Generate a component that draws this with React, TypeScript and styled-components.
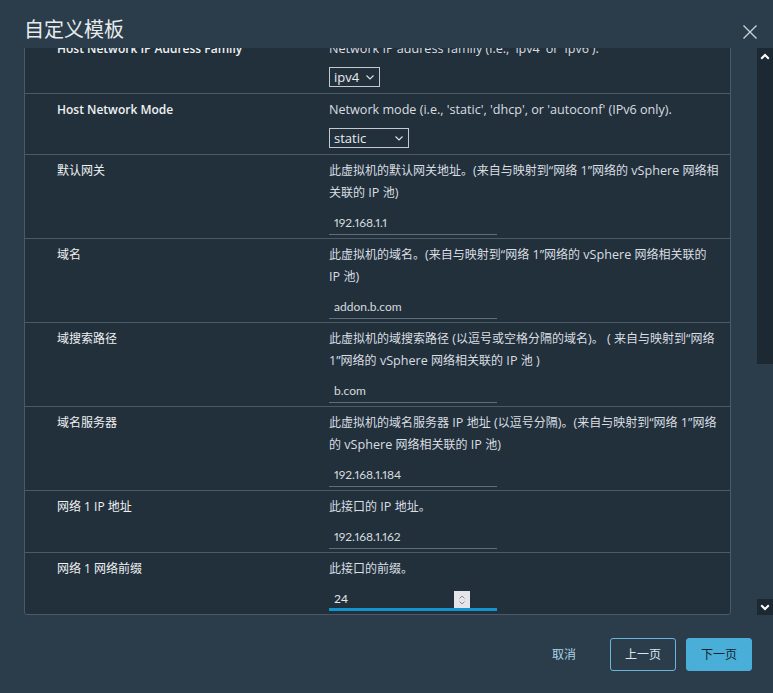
import React, { useCallback, useLayoutEffect, useRef, useState } from "react";
import styled, { createGlobalStyle } from "styled-components";

const FONT = `"Open Sans", "Noto Sans CJK SC", sans-serif`;
const VALUE_FONT = `Lato, "Noto Sans CJK SC", sans-serif`;

const GlobalStyle = createGlobalStyle`
  html, body { margin: 0; padding: 0; height: 100%; }
  body {
    background: #2b3d4a;
    font-family: ${FONT};
    color: #e3e8eb;
    overflow: hidden;
  }
  #root { height: 100%; }
  * { box-sizing: border-box; }
`;

const Dialog = styled.div`
  display: flex;
  flex-direction: column;
  height: 100vh;
  background: #2b3d4a;
`;

const Header = styled.header`
  flex: 0 0 48px;
  display: flex;
  align-items: flex-start;
  justify-content: space-between;
  padding: 17px 16px 0 24px;
`;

const Title = styled.h1`
  margin: 0;
  font-size: 20px;
  line-height: 26px;
  font-weight: 400;
  color: #e6ebee;
`;

const CloseButton = styled.button`
  background: none;
  border: 0;
  padding: 0;
  margin-top: 8px;
  width: 14px;
  height: 14px;
  color: #c9d1d6;
  display: flex;
  cursor: pointer;
`;

const BodyRow = styled.div`
  flex: 1 1 auto;
  min-height: 0;
  display: flex;
`;

const Scroller = styled.div`
  flex: 1 1 auto;
  min-width: 0;
  overflow-y: auto;
  padding: 0 26px 0 24px;
  scrollbar-width: none;
  &::-webkit-scrollbar { display: none; }
`;

const ScrollBar = styled.div`
  flex: 0 0 16px;
  display: flex;
  flex-direction: column;
  background: #1c2832;
`;

const ScrollButton = styled.button`
  flex: 0 0 16px;
  width: 16px;
  border: 0;
  padding: 0;
  background: #1c2832;
  display: flex;
  align-items: center;
  justify-content: center;
  cursor: pointer;
`;

const Track = styled.div`
  flex: 1 1 auto;
  display: flex;
  flex-direction: column;
`;

const Thumb = styled.div`
  width: 16px;
  background: #2b3d4a;
`;

const Grid = styled.div`
  border: 1px solid #4b5a66;
  border-radius: 3px;
  background: #22303b;
`;

const Row = styled.div`
  display: grid;
  grid-template-columns: 272px 1fr;
  padding: 5px 9.5px 3px 32px;
  & + & { border-top: 1px solid #4b5a66; }
`;

const Label = styled.div<{ $latin: boolean }>`
  font-size: 12px;
  line-height: 22px;
  font-weight: ${(p) => (p.$latin ? 600 : 400)};
  color: #eef1f3;
`;

const Cell = styled.div`
  display: flex;
  flex-direction: column;
  align-items: flex-start;
  min-width: 0;
`;

const Desc = styled.div`
  font-size: 12px;
  line-height: 22px;
  color: #d9dee2;
  width: 100%;
`;

const LatinRun = styled.span`
  font-size: 12.6px;
`;

const TextInput = styled.input`
  margin-top: 7px;
  width: 168px;
  height: 24px;
  border: 0;
  border-bottom: 1px solid #5f6e79;
  background: transparent;
  color: #d5dbdf;
  font: 12px ${VALUE_FONT};
  font-variant-numeric: proportional-nums;
  padding: 0 5px;
  outline: none;
`;

const SelectWrap = styled.div`
  position: relative;
  margin: 7px 0 3px;
  display: inline-flex;
`;

const Select = styled.select`
  appearance: none;
  height: 20px;
  border: 1px solid #c3c9ce;
  border-radius: 0;
  background: transparent;
  color: #e8ecef;
  font: 13px ${FONT};
  padding: 0 19px 0 4px;
  outline: none;
  & option { color: #000; }
`;

const Chevron = styled.svg`
  position: absolute;
  right: 6px;
  top: 8px;
  pointer-events: none;
`;

const NumberWrap = styled.div`
  margin-top: 7px;
  display: flex;
  align-items: flex-end;
  width: 168px;
  height: 24px;
  border-bottom: 3px solid #1394d0;
`;

const NumberInput = styled.input`
  width: 125px;
  height: 20px;
  border: 0;
  background: transparent;
  color: #e3e8eb;
  font: 12px ${VALUE_FONT};
  padding: 0 5px;
  outline: none;
`;

const Spinner = styled.span`
  width: 16px;
  height: 17px;
  background: #e4e4ea;
  display: flex;
  align-items: center;
  justify-content: center;
`;

const Footer = styled.footer`
  flex: 0 0 78px;
  display: flex;
  justify-content: flex-end;
  align-items: center;
  gap: 10px;
  padding-right: 21px;
`;

type Variant = "flat" | "outline" | "primary";

const Button = styled.button<{ $variant: Variant }>`
  height: 33px;
  width: ${(p) => (p.$variant === "flat" ? "72px" : "66px")};
  border-radius: 3px;
  font: 12px ${FONT};
  cursor: pointer;
  border: 1px solid
    ${(p) => (p.$variant === "outline" ? "#67b6dc" : p.$variant === "primary" ? "#49afd9" : "transparent")};
  background: ${(p) => (p.$variant === "primary" ? "#49afd9" : "transparent")};
  color: ${(p) => (p.$variant === "primary" ? "#17242c" : p.$variant === "outline" ? "#d9e6ee" : "#a9d2e6")};
`;

type Field =
  | { kind: "text"; value: string; type?: string }
  | { kind: "select"; value: string; options: string[] }
  | { kind: "number"; value: string };

type Prop = { label: string; desc: string; field: Field };

const rows: Prop[] = [
  { label: "主机名", desc: "此虚拟机的主机名。留空则使用 IP 地址的反向查找结果。", field: { kind: "text", value: "addon" } },
  { label: "Root 密码", desc: "root 用户帐户的初始密码。", field: { kind: "text", value: "VMware1!", type: "password" } },
  { label: "确认 Root 密码", desc: "再次输入 root 用户帐户的初始密码。", field: { kind: "text", value: "VMware1!", type: "password" } },
  { label: "Enable SSH", desc: "Enable SSH access to this VM (i.e., 'True' or 'False').", field: { kind: "select", value: "True", options: ["True", "False"] } },
  { label: "NTP 服务器", desc: "此虚拟机使用的 NTP 服务器 (以逗号分隔的主机名或 IP 地址)。如果留空，将使用 VMware Tools 进行时间同步。", field: { kind: "text", value: "pool.ntp.org" } },
  { label: "时区", desc: "此虚拟机的时区 (例如 'Asia/Shanghai')。", field: { kind: "text", value: "Asia/Shanghai" } },
  { label: "网络 1 IPv6 地址", desc: "此接口的 IPv6 地址。(来自与映射到“网络 1”网络的 vSphere 网络相关联的 IP 池，留空则不配置)", field: { kind: "text", value: "" } },
  { label: "网络 1 IPv6 前缀", desc: "此接口的 IPv6 前缀长度。(来自与映射到“网络 1”网络的 vSphere 网络相关联的 IP 池)", field: { kind: "text", value: "" } },
  { label: "广播地址", desc: "此虚拟机的广播地址。(来自与映射到“网络 1”网络的 vSphere 网络相关联的 IP 池)", field: { kind: "text", value: "192.168.1.255" } },
  { label: "Host Network Name", desc: "Network interface name (i.e., 'eth0').", field: { kind: "text", value: "eth0" } },
  { label: "Host Network IP Address Family", desc: "Network IP address family (i.e., 'ipv4' or 'ipv6').", field: { kind: "select", value: "ipv4", options: ["ipv4", "ipv6"] } },
  { label: "Host Network Mode", desc: "Network mode (i.e., 'static', 'dhcp', or 'autoconf' (IPv6 only).", field: { kind: "select", value: "static", options: ["static", "dhcp", "autoconf"] } },
  { label: "默认网关", desc: "此虚拟机的默认网关地址。(来自与映射到“网络 1”网络的 vSphere 网络相关联的 IP 池)", field: { kind: "text", value: "192.168.1.1" } },
  { label: "域名", desc: "此虚拟机的域名。(来自与映射到“网络 1”网络的 vSphere 网络相关联的 IP 池)", field: { kind: "text", value: "addon.b.com" } },
  { label: "域搜索路径", desc: "此虚拟机的域搜索路径 (以逗号或空格分隔的域名)。 ( 来自与映射到“网络 1”网络的 vSphere 网络相关联的 IP 池 )", field: { kind: "text", value: "b.com" } },
  { label: "域名服务器", desc: "此虚拟机的域名服务器 IP 地址 (以逗号分隔)。(来自与映射到“网络 1”网络的 vSphere 网络相关联的 IP 池)", field: { kind: "text", value: "192.168.1.184" } },
  { label: "网络 1 IP 地址", desc: "此接口的 IP 地址。", field: { kind: "text", value: "192.168.1.162" } },
  { label: "网络 1 网络前缀", desc: "此接口的前缀。", field: { kind: "number", value: "24" } },
];

const CJK = /[\u2e80-\u9fff\u3000-\u303f\uff00-\uffef]/;
const SPLIT = /([\u2e80-\u9fff\u3000-\u303f\uff00-\uffef]+)/;
const isLatin = (s: string) => !CJK.test(s);

function MixedText({ text }: { text: string }) {
  const parts = text.split(SPLIT).filter(Boolean);
  return (
    <>
      {parts.map((p, i) =>
        CJK.test(p) ? <React.Fragment key={i}>{p}</React.Fragment> : <LatinRun key={i}>{p}</LatinRun>
      )}
    </>
  );
}

function FieldControl({ field }: { field: Field }) {
  if (field.kind === "select") {
    return (
      <SelectWrap>
        <Select defaultValue={field.value}>
          {field.options.map((o) => (
            <option key={o} value={o}>{o}</option>
          ))}
        </Select>
        <Chevron width="8" height="5" viewBox="0 0 8 5">
          <path d="M0.5 0.5 L4 4 L7.5 0.5" fill="none" stroke="#dfe4e7" strokeWidth="1.1" />
        </Chevron>
      </SelectWrap>
    );
  }
  if (field.kind === "number") {
    return (
      <NumberWrap>
        <NumberInput type="text" defaultValue={field.value} />
        <Spinner>
          <svg width="8" height="12" viewBox="0 0 8 12">
            <path d="M1.5 4.5 L4 2 L6.5 4.5" fill="none" stroke="#8c8c94" strokeWidth="1" />
            <path d="M1.5 7.5 L4 10 L6.5 7.5" fill="none" stroke="#8c8c94" strokeWidth="1" />
          </svg>
        </Spinner>
      </NumberWrap>
    );
  }
  return <TextInput type={field.type ?? "text"} defaultValue={field.value} />;
}

export default function App() {
  const scrollRef = useRef<HTMLDivElement>(null);
  const [thumb, setThumb] = useState({ top: 0, height: 0 });

  const measure = useCallback(() => {
    const el = scrollRef.current;
    if (!el) return;
    const track = el.clientHeight - 32;
    const height = Math.max(20, (track * el.clientHeight) / el.scrollHeight);
    const max = el.scrollHeight - el.clientHeight;
    const top = max > 0 ? ((track - height) * el.scrollTop) / max : 0;
    setThumb({ top, height });
  }, []);

  useLayoutEffect(() => {
    const el = scrollRef.current;
    if (el) el.scrollTop = el.scrollHeight;
    measure();
  }, [measure]);

  const step = (d: number) => {
    const el = scrollRef.current;
    if (el) el.scrollTop += d;
  };

  return (
    <>
      <GlobalStyle />
      <Dialog>
        <Header>
          <Title>自定义模板</Title>
          <CloseButton aria-label="关闭">
            <svg width="14" height="14" viewBox="0 0 14 14">
              <path d="M0.5 0.5 L13.5 13.5 M13.5 0.5 L0.5 13.5" stroke="currentColor" strokeWidth="1.4" />
            </svg>
          </CloseButton>
        </Header>
        <BodyRow>
          <Scroller ref={scrollRef} onScroll={measure}>
            <Grid>
              {rows.map((r) => (
                <Row key={r.label}>
                  <Label $latin={isLatin(r.label)}>{r.label}</Label>
                  <Cell>
                    <Desc>
                      <MixedText text={r.desc} />
                    </Desc>
                    <FieldControl field={r.field} />
                  </Cell>
                </Row>
              ))}
            </Grid>
          </Scroller>
          <ScrollBar>
            <ScrollButton aria-label="向上滚动" onClick={() => step(-40)}>
              <svg width="10" height="7" viewBox="0 0 10 7">
                <path d="M1.2 5.8 L5 2 L8.8 5.8" fill="none" stroke="#ffffff" strokeWidth="2" />
              </svg>
            </ScrollButton>
            <Track>
              <Thumb style={{ height: thumb.height, marginTop: thumb.top }} />
            </Track>
            <ScrollButton aria-label="向下滚动" onClick={() => step(40)}>
              <svg width="10" height="7" viewBox="0 0 10 7">
                <path d="M1.2 1.2 L5 5 L8.8 1.2" fill="none" stroke="#ffffff" strokeWidth="2" />
              </svg>
            </ScrollButton>
          </ScrollBar>
        </BodyRow>
        <Footer>
          <Button $variant="flat">取消</Button>
          <Button $variant="outline">上一页</Button>
          <Button $variant="primary">下一页</Button>
        </Footer>
      </Dialog>
    </>
  );
}
